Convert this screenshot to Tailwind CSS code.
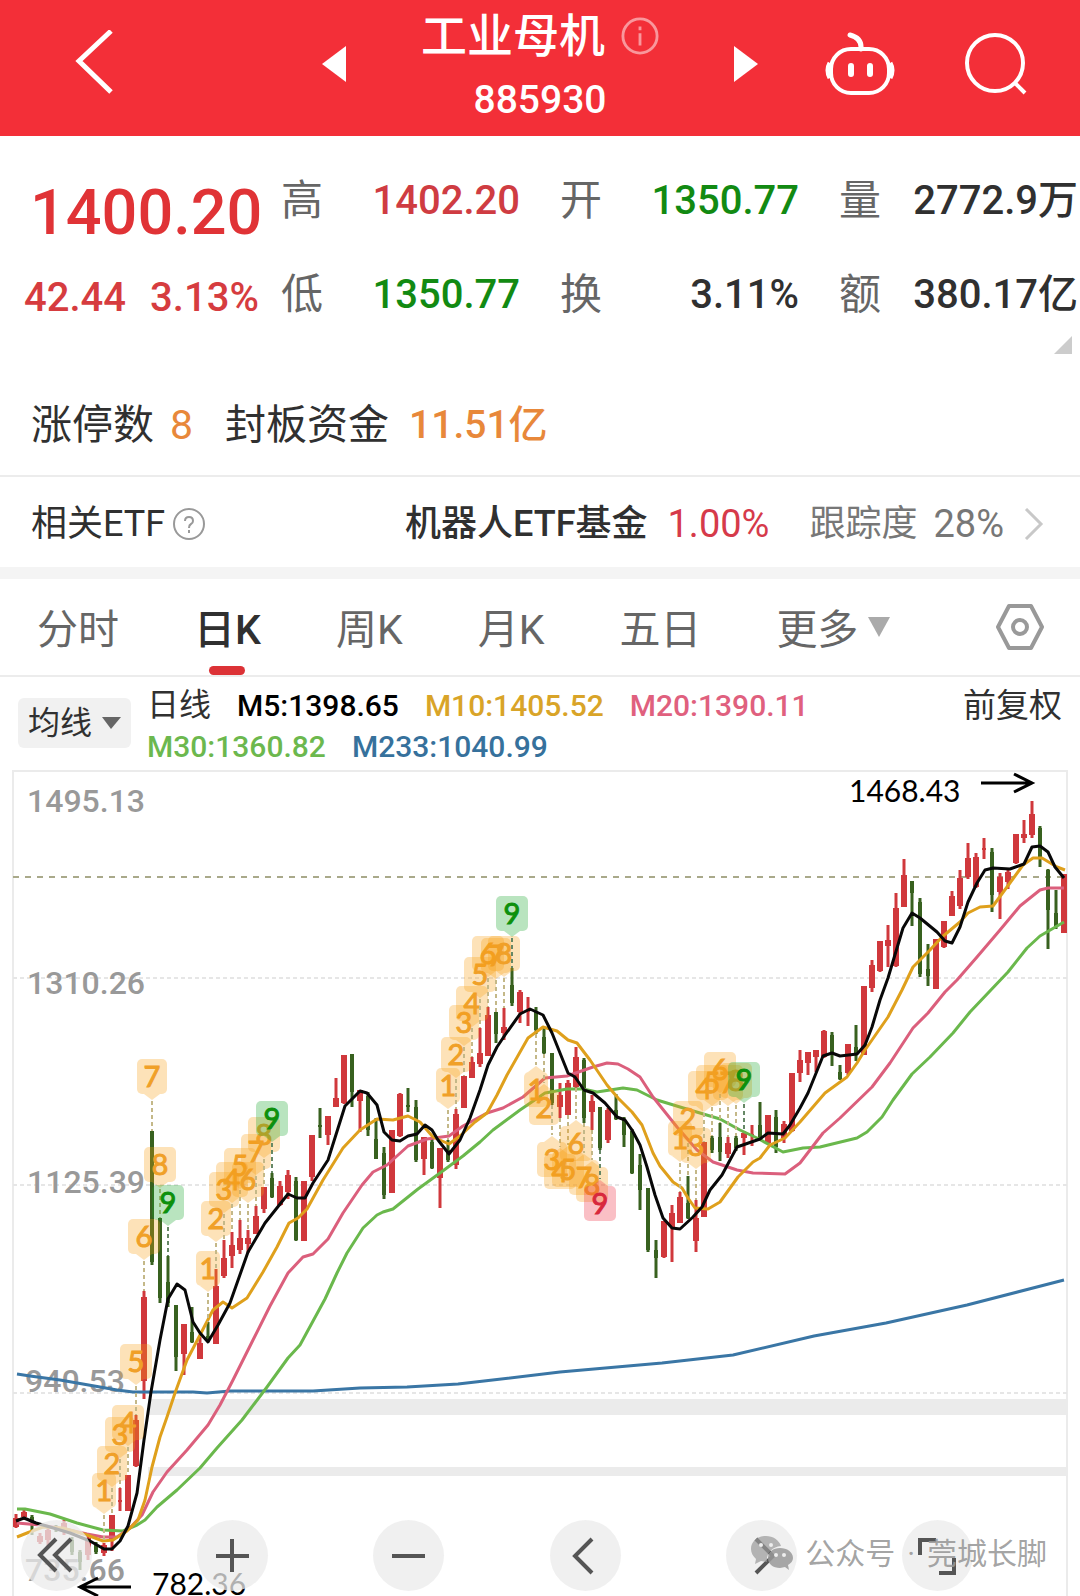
<!DOCTYPE html>
<html lang="zh-Hans">
<head>
    <meta charset="UTF-8">
    <meta name="viewport" content="width=device-width, initial-scale=1.0">
    <title>工业母机 885930</title>
    <script src="https://cdn.jsdelivr.net/npm/@tailwindcss/browser@4"></script>
</head>
<body class="bg-white text-[#303030] font-[Roboto,'Noto_Sans_CJK_SC',sans-serif] overflow-x-hidden">
    <!-- 顶部导航 -->
    <header class="grid grid-cols-[1fr_auto_1fr] items-center h-[136px] bg-[#f32f38] text-white">
        <button aria-label="返回" class="justify-self-start ml-[74px] pb-3">
            <svg class="w-10 h-16" viewBox="0 0 40 64" fill="none" stroke="currentColor" stroke-width="5"><path d="M37 1 5 31 37 62"/></svg>
        </button>
        <div class="flex items-center justify-between w-[436px]">
            <button aria-label="上一个" class="pb-2"><svg class="w-6 h-9" viewBox="0 0 24 36" fill="currentColor"><path d="M24 0V36L0 18Z"/></svg></button>
            <div class="flex flex-col items-center">
                <h1 class="flex items-center gap-4 text-[46px] leading-[64px] font-medium">工业母机
                    <svg class="w-[38px] h-[38px] text-white/50" viewBox="0 0 40 40" fill="none" stroke="currentColor" stroke-width="3"><circle cx="20" cy="20" r="18"/><path d="M20 17V30M20 10V14"/></svg>
                </h1>
                <p class="text-[39px] leading-[64px] font-medium">885930</p>
            </div>
            <button aria-label="下一个" class="pb-2"><svg class="w-6 h-9" viewBox="0 0 24 36" fill="currentColor"><path d="M0 0V36L24 18Z"/></svg></button>
        </div>
        <div class="flex items-center justify-end gap-[70px] pr-[53px] pb-2">
            <button aria-label="智能助手">
                <svg class="w-[70px] h-16" viewBox="0 0 70 64" fill="none" stroke="currentColor" stroke-width="4">
                    <rect x="6" y="17" width="58" height="44" rx="20"/>
                    <path d="M5 31Q1 38 5 46M65 31Q69 38 65 46" stroke-width="5"/>
                    <path d="M36 17Q37 6 25 3" stroke-width="5" stroke-linecap="round"/>
                    <path d="M26 34V42M45 34V42" stroke-width="6" stroke-linecap="round"/>
                </svg>
            </button>
            <button aria-label="搜索">
                <svg class="w-[62px] h-[62px]" viewBox="0 0 62 62" fill="none" stroke="currentColor" stroke-width="4"><circle cx="30" cy="30" r="28"/><path d="M49 49 60 60"/></svg>
            </button>
        </div>
    </header>

    <!-- 行情概览 -->
    <section class="relative flex h-[220px] pt-[18px] pr-[2px]">
        <div class="w-[281px] shrink-0 font-medium text-[#e03336]">
            <div class="pl-[30px] pt-3 text-[63px] leading-[94px]">1400.20</div>
            <div class="flex gap-6 pl-6 text-[40px] leading-[76px] text-[#d63c3f]"><span>42.44</span><span>3.13%</span></div>
        </div>
        <dl class="grid grid-cols-3 flex-1 gap-x-10 content-start text-[40px] leading-[94px] whitespace-nowrap font-medium">
            <div class="flex justify-between"><dt class="text-[42px] font-normal text-[#666]">高</dt><dd class="text-[#cf3c42]">1402.20</dd></div>
            <div class="flex justify-between"><dt class="text-[42px] font-normal text-[#666]">开</dt><dd class="text-[#128a12]">1350.77</dd></div>
            <div class="flex justify-between"><dt class="text-[42px] font-normal text-[#666]">量</dt><dd>2772.9万</dd></div>
            <div class="flex justify-between"><dt class="text-[42px] font-normal text-[#666]">低</dt><dd class="text-[#128a12]">1350.77</dd></div>
            <div class="flex justify-between"><dt class="text-[42px] font-normal text-[#666]">换</dt><dd>3.11%</dd></div>
            <div class="flex justify-between"><dt class="text-[42px] font-normal text-[#666]">额</dt><dd>380.17亿</dd></div>
        </dl>
        <svg class="absolute right-2 bottom-[2px] w-[18px] h-[18px]" viewBox="0 0 18 18" fill="#ccc"><path d="M18 0V18H0Z"/></svg>
    </section>

    <section class="flex items-center h-[121px] pl-[31px] pt-5 text-[41px] border-b-2 border-[#ececec]">
        <span>涨停数</span>
        <span class="ml-4 text-[#e8883a]">8</span>
        <span class="ml-8">封板资金</span>
        <span class="ml-5 text-[39px] font-medium text-[#e8883a]">11.51亿</span>
    </section>

    <section class="flex items-center h-[90px] pl-[31px] pr-9 pt-1 text-[36px]">
        <span>相关ETF</span>
        <button aria-label="说明" class="ml-2">
            <svg class="w-8 h-8" viewBox="0 0 32 32" fill="none" stroke="#999" stroke-width="2"><circle cx="16" cy="16" r="15"/><path d="M12 13Q12 9 16 9T20 13Q20 15 18 16T16 20M16 22V25"/></svg>
        </button>
        <a href="#" class="flex items-center ml-auto">
            <span class="font-medium">机器人ETF基金</span>
            <span class="ml-5 text-[38px] text-[#d63a4a]">1.00%</span>
            <span class="ml-10 text-[#777]">跟踪度</span>
            <span class="ml-4 text-[38px] text-[#777]">28%</span>
            <svg class="ml-5 w-5 h-8" viewBox="0 0 20 32" fill="none" stroke="#c8c8c8" stroke-width="3"><path d="M2 1 17 16 2 31"/></svg>
        </a>
    </section>

    <!-- 周期切换 -->
    <nav class="flex items-center justify-between h-[110px] pl-[37px] pr-9 border-t-12 border-b-2 border-t-[#f4f4f4] border-b-[#ececec] text-[41px] text-[#666]">
        <div class="flex gap-[75px] h-full items-center whitespace-nowrap">
            <button class="h-full pt-2">分时</button>
            <button class="relative h-full pt-2 font-medium text-[#303030]">日K<span class="absolute left-1/2 bottom-0 -translate-x-1/2 w-9 h-[9px] rounded-full bg-[#dc3236]"></span></button>
            <button class="h-full pt-2">周K</button>
            <button class="h-full pt-2">月K</button>
            <button class="h-full pt-2">五日</button>
            <button class="flex items-center gap-[10px] h-full"><span class="pt-2">更多</span><svg class="w-[22px] h-5" viewBox="0 0 22 20" fill="#aaa"><path d="M0 0H22L11 20Z"/></svg></button>
        </div>
        <button aria-label="设置">
            <svg class="w-12 h-12" viewBox="0 0 48 48" fill="none" stroke="#999" stroke-width="4" stroke-linejoin="round"><path d="M13 3H35L46 24 35 45H13L2 24Z"/><circle cx="24" cy="24" r="7"/></svg>
        </button>
    </nav>

    <!-- 均线图例 -->
    <section class="flex items-start h-[93px] pt-2 pl-[18px] pr-[18px] whitespace-nowrap">
        <button class="flex items-center gap-[10px] mt-[13px] px-[10px] h-[50px] rounded-md bg-[#f1f1f1] text-[32px]">均线<svg class="w-[19px] h-3" viewBox="0 0 19 12" fill="#666"><path d="M0 0H19L9 12Z"/></svg></button>
        <div class="ml-4 text-[30px] leading-[41px] font-medium">
            <div class="flex gap-[26px]">
                <span class="text-[32px] font-normal">日线</span>
                <span class="text-black">M5:1398.65</span>
                <span class="text-[#d9a428]">M10:1405.52</span>
                <span class="text-[#e0607e]">M20:1390.11</span>
            </div>
            <div class="flex gap-[26px]">
                <span class="text-[#6cb84e]">M30:1360.82</span>
                <span class="text-[#36719c]">M233:1040.99</span>
            </div>
        </div>
        <button class="ml-auto text-[33px] leading-[41px]">前复权</button>
    </section>

    <!-- K线图 -->
    <main class="relative">
        <svg id="chart" class="block w-full h-auto" viewBox="0 770 1080 826" fill="none">
            <path d="M13 1596V771H1067V1596" stroke="#ebebeb" stroke-width="2"/>
            <path d="M13 978H1067M13 1185H1067M13 1393H1067" stroke="#e6e6e6" stroke-width="2" stroke-dasharray="4 3"/>
            <path d="M148 1399H1067V1415H148ZM148 1467H1067V1476H148Z" fill="#ebebeb"/>
            <path d="M13 877H1067" stroke="#a9a98a" stroke-width="2" stroke-dasharray="6 6"/>
            <g class="font-[Roboto,sans-serif] text-[32px] font-medium" fill="#999">
                <text x="27" y="812">1495.13</text>
                <text x="27" y="994">1310.26</text>
                <text x="27" y="1193">1125.39</text>
                <text x="25" y="1392">940.53</text>
                <text x="25" y="1581">735.66</text>
            </g>
            <g id="candles"></g>
            <g id="lines" stroke-width="3" stroke-linejoin="round"></g>
            <g id="marks" class="font-[Lato,sans-serif] text-[29px]" text-anchor="middle"></g>
            <g class="font-[Lato,sans-serif] text-[30px]" fill="#000">
                <text x="849" y="802">1468.43</text>
                <text x="152" y="1595">782.36</text>
            </g>
            <path d="M981 783H1031M1014 774 1032 783 1014 792M131 1587H81M98 1578 80 1587 98 1596" stroke="#000" stroke-width="3"/>
        </svg>

        <div class="absolute inset-x-0 bottom-[5px] flex justify-between pl-[21px] pr-[107px] text-[#555]">
            <button aria-label="最早" class="size-[71px] rounded-full bg-[#ebebeb]/75"><svg viewBox="0 0 71 71" fill="none" stroke="currentColor" stroke-width="4"><path d="M35 19 19 35 35 51M50 19 34 35 50 51"/></svg></button>
            <button aria-label="放大" class="size-[71px] rounded-full bg-[#ebebeb]/75"><svg viewBox="0 0 71 71" fill="none" stroke="currentColor" stroke-width="4"><path d="M19 36H52M35 19V52"/></svg></button>
            <button aria-label="缩小" class="size-[71px] rounded-full bg-[#ebebeb]/75"><svg viewBox="0 0 71 71" fill="none" stroke="currentColor" stroke-width="4"><path d="M19 36H52"/></svg></button>
            <button aria-label="左移" class="size-[71px] rounded-full bg-[#ebebeb]/75"><svg viewBox="0 0 71 71" fill="none" stroke="currentColor" stroke-width="4"><path d="M42 19 25 36 42 53"/></svg></button>
            <button aria-label="右移" class="size-[71px] rounded-full bg-[#ebebeb]/75"><svg viewBox="0 0 71 71" fill="none" stroke="currentColor" stroke-width="4"><path d="M30 19 47 36 30 53"/></svg></button>
            <button aria-label="全屏" class="size-[71px] rounded-full bg-[#ebebeb]/75"><svg viewBox="0 0 71 71" fill="none" stroke="currentColor" stroke-width="4"><path d="M18 35V20H34M37 53H52V38"/></svg></button>
        </div>

        <!-- 公众号水印 -->
        <div class="absolute right-[33px] bottom-5 flex items-center gap-3 text-[30px] leading-[44px] text-[#999]/90 pointer-events-none whitespace-nowrap">
            <svg class="w-[42px] h-9" viewBox="0 0 42 36">
                <path fill="#999" fill-opacity=".7" d="M15 0C6 0 0 6 0 13c0 4 2 7 5 10l-1 5 6-3 6 1C15 17 21 11 30 10 28 4 22 0 15 0Z"/>
                <path fill="#999" fill-opacity=".85" d="M29 12c-7 0-12 4-12 10s5 10 12 10l5-1 4 3-1-5c3-2 5-4 5-7 0-6-6-10-13-10Z"/>
                <g fill="#eee"><circle cx="10" cy="9" r="2"/><circle cx="20" cy="9" r="2"/><circle cx="25" cy="19" r="2"/><circle cx="33" cy="19" r="2"/></g>
            </svg>
            <span>公众号</span><span>·</span><span>莞城长脚</span>
        </div>
    </main>

    <script>
        const RED = '#d0383c';
        const GREEN = '#38611f';
        const STEP = 8;   // K线间距
        const LEFT = 16;  // 第一根K线的位置

        // [颜色, 最高, 实体上沿, 实体下沿, 最低]
        const candles = [
            ['r',1514,1518,1527,1528],['r',1510,1512,1517,1520],['g',1515,1517,1521,1535],['r',1533,1536,1542,1544],['r',1527,1530,1540,1546],['g',1525,1527,1529,1532],
            ['r',1520,1523,1532,1535],['g',1537,1540,1552,1555],['g',1550,1552,1562,1570],['r',1535,1538,1555,1560],['g',1542,1544,1552,1554],['r',1543,1545,1553,1556],
            ['r',1515,1515,1540,1551],['r',1488,1500,1502,1511],['r',1475,1475,1511,1511],['r',1415,1420,1466,1467],['r',1291,1297,1381,1399],['g',1131,1131,1262,1265],
            ['g',1218,1218,1298,1303],['g',1256,1282,1303,1307],['g',1305,1305,1357,1371],['r',1324,1324,1354,1375],['g',1307,1332,1342,1343],['r',1337,1343,1359,1359],
            ['g',1322,1336,1340,1341],['r',1269,1286,1344,1344],['r',1240,1258,1276,1278],['r',1232,1245,1256,1268],['r',1220,1238,1250,1254],['r',1230,1238,1244,1253],
            ['r',1206,1216,1234,1234],['r',1187,1187,1209,1213],['g',1173,1178,1197,1198],['r',1181,1186,1205,1206],['r',1170,1175,1192,1199],['g',1177,1181,1240,1241],
            ['r',1181,1181,1241,1241],['r',1135,1135,1177,1181],['g',1108,1125,1127,1138],['r',1116,1116,1135,1145],['r',1078,1098,1107,1107],['r',1055,1055,1103,1104],
            ['g',1054,1054,1092,1107],['r',1090,1090,1101,1132],['g',1092,1096,1130,1136],['g',1118,1139,1159,1159],['g',1147,1153,1195,1199],['r',1130,1130,1193,1193],
            ['r',1093,1094,1136,1137],['g',1088,1105,1107,1112],['g',1100,1107,1160,1162],['r',1137,1137,1159,1175],['g',1138,1142,1168,1169],['r',1148,1148,1178,1208],
            ['g',1140,1150,1160,1162],['r',1109,1114,1165,1169],['r',1076,1076,1108,1108],['r',1057,1062,1078,1078],['r',1028,1053,1064,1067],['r',1007,1015,1056,1056],
            ['g',1012,1012,1034,1043],['r',1008,1027,1033,1040],['g',968,985,1003,1006],['r',990,992,1012,1023],['r',997,1010,1012,1026],['g',1007,1012,1030,1034],
            ['g',1027,1037,1053,1054],['g',1053,1053,1103,1105],['r',1083,1095,1107,1118],['r',1080,1083,1115,1115],['r',1047,1057,1087,1088],['g',1058,1060,1118,1123],
            ['r',1095,1101,1112,1130],['g',1107,1107,1148,1150],['r',1108,1110,1140,1143],['g',1094,1110,1119,1120],['g',1117,1119,1135,1147],['g',1129,1131,1173,1174],
            ['g',1154,1165,1190,1210],['g',1188,1188,1250,1252],['g',1240,1250,1258,1278],['r',1221,1221,1257,1258],['r',1205,1213,1227,1262],['r',1192,1197,1223,1223],
            ['g',1176,1203,1218,1219],['r',1200,1218,1241,1252],['r',1142,1142,1217,1217],['g',1136,1138,1150,1153],['g',1123,1137,1152,1161],['r',1137,1143,1154,1158],
            ['g',1136,1138,1148,1151],['r',1131,1133,1138,1155],['r',1125,1134,1136,1146],['g',1102,1125,1138,1139],['r',1115,1115,1143,1144],['g',1110,1117,1147,1153],
            ['r',1121,1124,1138,1143],['r',1073,1073,1131,1132],['r',1050,1060,1073,1082],['r',1052,1052,1063,1075],['r',1050,1050,1057,1072],['r',1030,1031,1057,1058],
            ['g',1032,1035,1053,1066],['g',1065,1072,1079,1080],['r',1044,1044,1073,1075],['g',1025,1047,1055,1061],['r',986,986,1055,1055],['r',960,965,988,992],
            ['r',941,941,971,972],['r',925,940,946,967],['r',893,908,966,967],['r',859,875,907,907],['g',881,881,893,926],['g',898,902,974,977],
            ['g',944,969,976,986],['r',939,939,989,989],['r',921,921,947,948],['r',891,896,916,916],['r',870,878,906,909],['r',843,858,877,879],
            ['r',853,857,887,888],['r',838,848,850,859],['g',848,852,895,912],['r',873,877,892,919],['r',868,872,882,889],['r',834,834,863,864],
            ['r',820,834,838,843],['r',801,814,835,838],['g',826,828,858,867],['g',869,870,910,949],['g',890,913,926,929],['r',874,874,933,933]
        ];

        // 均线
        const averages = [
            ['#3a76a5', '17,1374 30,1376 60,1380 100,1387 117,1390 133,1392 193,1392 207,1393 230,1391 313,1391 360,1388 407,1387 458,1384 484,1381 560,1372 662,1363 733,1355 814,1336 886,1323 967,1305 1064,1280'],
            ['#6ab84c', '17,1509 25,1509 50,1514 77,1523 103,1530 123,1531 137,1525 145,1520 157,1507 177,1490 200,1468 217,1448 242,1420 267,1387 288,1358 300,1345 325,1299 337,1273 347,1253 363,1228 377,1215 383,1212 393,1209 418,1189 440,1173 463,1156 480,1142 493,1130 520,1110 545,1093 567,1089 583,1089 597,1092 610,1090 623,1088 637,1090 657,1100 680,1107 720,1119 740,1130 757,1138 783,1152 803,1148 820,1147 857,1138 867,1132 882,1117 893,1100 912,1074 930,1057 953,1033 970,1012 1008,972 1027,948 1040,936 1064,922'],
            ['#db5f7c', '17,1523 40,1525 65,1529 87,1534 103,1537 117,1537 130,1528 142,1515 153,1492 167,1472 187,1450 208,1425 220,1405 233,1380 253,1340 270,1306 288,1273 303,1257 313,1254 328,1239 343,1213 362,1185 373,1172 387,1165 408,1146 427,1139 449,1136 463,1126 487,1113 503,1108 523,1097 545,1078 567,1076 593,1067 607,1063 618,1064 628,1069 640,1077 653,1097 677,1127 697,1150 713,1162 737,1170 753,1173 785,1174 800,1163 823,1133 840,1118 872,1087 890,1063 913,1028 928,1013 945,992 957,980 977,957 1000,930 1020,906 1040,890 1048,888 1064,888'],
            ['#dfa01c', '17,1537 27,1533 43,1527 63,1528 87,1535 103,1541 113,1540 127,1531 138,1520 145,1500 152,1467 160,1437 167,1417 175,1393 187,1360 200,1335 213,1310 223,1302 232,1308 247,1298 263,1272 277,1247 289,1223 298,1218 307,1209 323,1180 343,1148 360,1130 377,1119 393,1120 408,1116 420,1122 433,1137 449,1144 460,1136 475,1122 487,1113 497,1095 507,1075 528,1038 543,1027 557,1031 568,1040 577,1043 590,1060 607,1085 618,1098 632,1112 642,1125 653,1153 660,1166 673,1182 682,1188 688,1198 695,1208 708,1209 720,1202 738,1177 753,1162 760,1158 770,1145 785,1138 800,1122 825,1093 847,1077 857,1063 865,1050 888,1017 902,990 913,967 930,950 942,937 960,922 968,913 980,907 993,906 1007,887 1023,865 1033,858 1042,858 1057,867 1065,870'],
            ['#080808', '16,1521 24,1518 36,1523 50,1527 70,1533 90,1541 104,1549 112,1549 120,1541 128,1526 137,1493 144,1440 151,1392 160,1340 168,1299 177,1284 185,1290 193,1322 200,1333 208,1342 218,1325 230,1303 248,1252 265,1223 288,1194 297,1198 305,1198 313,1183 328,1160 345,1106 360,1091 367,1093 377,1105 384,1132 392,1140 400,1141 408,1136 417,1134 425,1125 432,1130 438,1140 449,1154 460,1140 470,1118 480,1090 488,1065 497,1047 505,1035 520,1014 530,1009 543,1015 552,1033 568,1073 575,1077 584,1090 593,1093 605,1103 617,1117 625,1120 632,1130 640,1145 647,1167 655,1195 663,1218 672,1228 680,1229 693,1217 702,1207 710,1190 722,1175 737,1147 760,1139 768,1133 783,1134 790,1125 800,1108 808,1093 823,1056 832,1053 840,1056 857,1054 865,1045 872,1027 880,1000 888,978 897,948 903,928 912,913 920,918 937,932 945,941 952,943 960,927 968,902 977,883 985,870 993,868 1010,869 1024,864 1032,847 1040,846 1048,852 1055,867 1064,878']
        ];

        // 九转标记：[起始K线序号, 箭头是否朝上, 各方块上沿]
        const sequences = [
            [11, false, [1473,1446,1417,1405,1344,1219,1059,1147,1185]],
            [24, false, [1251,1201,1172,1162,1148,1162,1134,1117,1101]],
            [54, false, [1068,1037,1005,986,957,936,938,936,896]],
            [65, true, [1072,1090,1142,1154,1152,1126,1160,1167,1186]],
            [83, false, [1121,1101,1128,1071,1065,1052,1065,1063,1062]]
        ];

        const xOf = i => LEFT + i * STEP;

        document.getElementById('candles').innerHTML = candles.map(([c, high, top, bottom, low], i) => {
            const color = c === 'r' ? RED : GREEN;
            const body = c === 'r' ? 6 : 4;
            const thin = bottom - top < 3;
            return `<path d="M${xOf(i)} ${high}V${low}" stroke="${color}" stroke-width="3"/>` +
                `<path d="M${xOf(i)} ${top}V${bottom}" stroke="${color}" stroke-width="${thin ? 4 : body}"/>`;
        }).join('');

        document.getElementById('lines').innerHTML = averages.map(([color, points]) =>
            `<polyline points="${points}" stroke="${color}"/>`).join('');

        document.getElementById('marks').innerHTML = sequences.map(([start, up, tops]) => tops.map((y, n) => {
            const i = start + n;
            const x = xOf(i);
            const w = n === 0 ? 12 : [1, 2, 6].includes(n) ? 15 : 16;
            const last = n === 8;
            const fill = !last ? '#fa9e14' : up ? '#ee2a40' : '#18a52c';
            const ink = !last ? '#f0a028' : up ? '#d8283c' : '#0c900c';
            const tip = up ? `M${x - 8} ${y}L${x} ${y - 6} ${x + 8} ${y}Z` : `M${x - 8} ${y + 35}L${x} ${y + 41} ${x + 8} ${y + 35}Z`;
            const dash = up ? `M${x} ${candles[i][4]}V${y - 7}` : `M${x} ${y + 42}V${candles[i][1]}`;
            return `<path d="${dash}" stroke="${last ? '#668866' : '#c4b888'}" stroke-width="2" stroke-dasharray="4 3"/>` +
                `<g fill="${fill}" fill-opacity=".3"><rect x="${x - w}" y="${y}" width="${w * 2}" height="35" rx="5"/><path d="${tip}"/></g>` +
                `<text x="${x}" y="${y + 28}" fill="${ink}" stroke="${ink}">${n + 1}</text>`;
        }).join('')).join('');
    </script>
</body>
</html>
